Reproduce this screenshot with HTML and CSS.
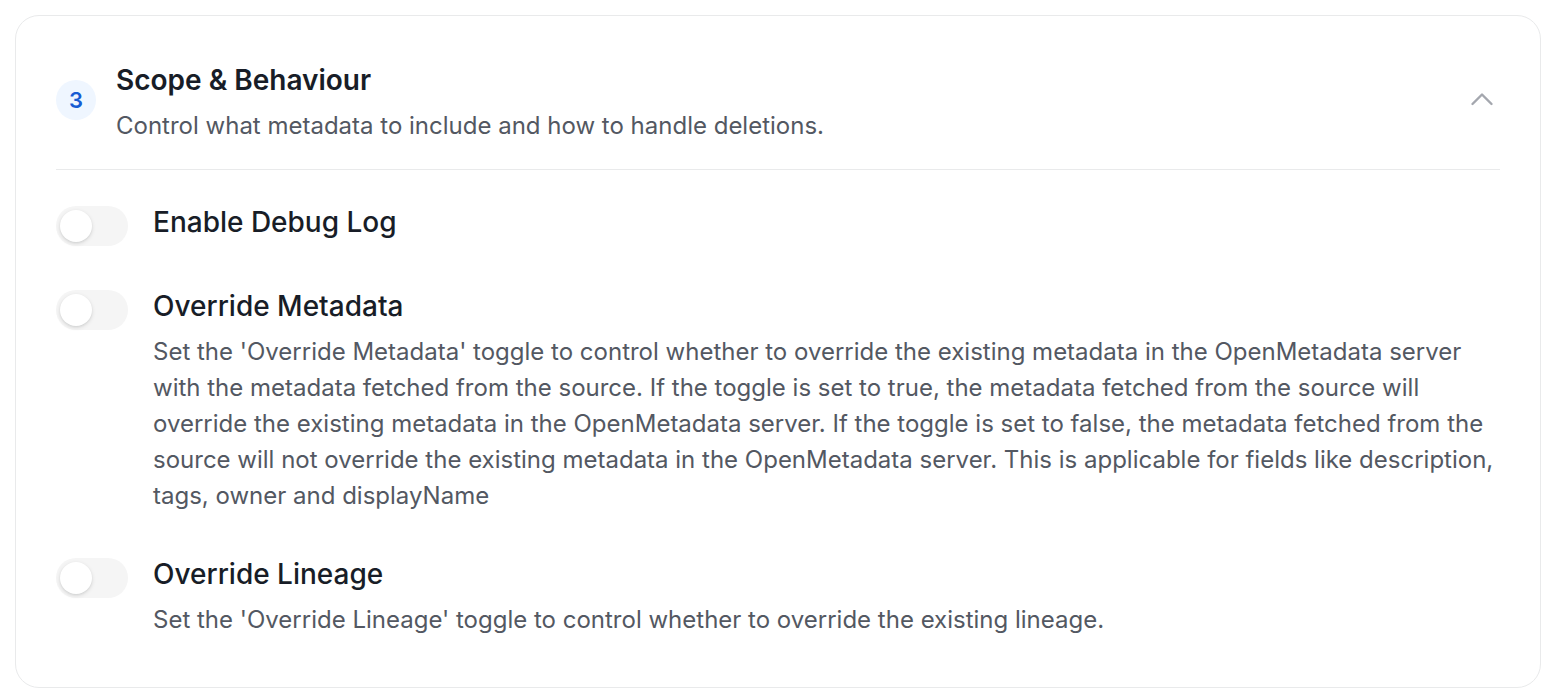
FILE: index.html
```html
<!DOCTYPE html>
<html lang="en">
<head>
<meta charset="utf-8">
<title>Scope &amp; Behaviour</title>
<link rel="stylesheet" href="styles.css">
</head>
<body>
<section class="card">
  <header class="card-header">
    <div class="step-badge">3</div>
    <div class="header-text">
      <h2 class="title">Scope &amp; Behaviour</h2>
      <p class="subtitle">Control what metadata to include and how to handle deletions.</p>
    </div>
    <button class="collapse-btn" aria-label="Collapse">
      <svg width="24" height="24" viewBox="0 0 24 24" fill="none" stroke="currentColor" stroke-width="2.4" stroke-linecap="round" stroke-linejoin="round"><path d="M2.5 16 L12 6.5 L21.5 16"/></svg>
    </button>
  </header>
  <div class="options">
    <div class="option">
      <span class="toggle"><span class="knob"></span></span>
      <div class="option-text">
        <div class="option-label">Enable Debug Log</div>
      </div>
    </div>
    <div class="option">
      <span class="toggle"><span class="knob"></span></span>
      <div class="option-text">
        <div class="option-label">Override Metadata</div>
        <p class="option-desc">Set the 'Override Metadata' toggle to control whether to override the existing metadata in the OpenMetadata server with the metadata fetched from the source. If the toggle is set to true, the metadata fetched from the source will override the existing metadata in the OpenMetadata server. If the toggle is set to false, the metadata fetched from the source will not override the existing metadata in the OpenMetadata server. This is applicable for fields like description, tags, owner and displayName</p>
      </div>
    </div>
    <div class="option">
      <span class="toggle"><span class="knob"></span></span>
      <div class="option-text">
        <div class="option-label">Override Lineage</div>
        <p class="option-desc">Set the 'Override Lineage' toggle to control whether to override the existing lineage.</p>
      </div>
    </div>
  </div>
</section>
</body>
</html>
```

FILE: styles.css
```css
* { box-sizing: border-box; }

html, body {
  margin: 0;
  padding: 0;
  background: #ffffff;
}

body {
  padding: 15px 19px 0 15px;
  font-family: Inter, "Noto Sans", "Liberation Sans", sans-serif;
  color: #181d27;
}

.card {
  border: 1.5px solid #e9eaeb;
  border-radius: 24px;
  padding: 40px 40px 48px 40px;
  height: 673px;
  background: #fff;
}

.card-header {
  display: flex;
  align-items: center;
  gap: 20px;
  padding: 6px 0 25px 0;
  border-bottom: 1.5px solid #e9eaeb;
}

.step-badge {
  flex: none;
  width: 40px;
  height: 40px;
  border-radius: 50%;
  background: #eff6ff;
  color: #175cd3;
  font-size: 22px;
  font-weight: 600;
  display: flex;
  align-items: center;
  justify-content: center;
  margin-top: -6px;
}

.header-text {
  flex: 1;
  min-width: 0;
}

.title {
  margin: 0 0 10px 0;
  font-size: 28px;
  line-height: 36px;
  font-weight: 600;
  color: #181d27;
}

.subtitle {
  margin: 0;
  font-size: 24px;
  line-height: 36px;
  color: #535862;
}

.collapse-btn {
  flex: none;
  background: none;
  border: 0;
  padding: 0;
  margin: -6px 6px 0 0;
  width: 24px;
  height: 24px;
  color: #a4a7ae;
  display: flex;
}

.options {
  display: flex;
  flex-direction: column;
  gap: 44px;
  padding-top: 36px;
}

.option {
  display: flex;
  align-items: flex-start;
  gap: 25px;
}

.toggle {
  flex: none;
  width: 72px;
  height: 40px;
  border-radius: 20px;
  background: #f5f5f5;
  padding: 4px;
  display: flex;
  align-items: center;
}

.knob {
  width: 32px;
  height: 32px;
  border-radius: 50%;
  background: #ffffff;
  box-shadow: 0 1.5px 4px rgba(10, 13, 18, 0.12), 0 1px 2px rgba(10, 13, 18, 0.06);
}

.option-text {
  flex: 1;
  min-width: 0;
}

.option-label {
  font-size: 28px;
  line-height: 32px;
  font-weight: 500;
  color: #181d27;
}

.option-desc {
  margin: 12px 0 0 0;
  font-size: 24px;
  line-height: 36px;
  color: #535862;
}
```
